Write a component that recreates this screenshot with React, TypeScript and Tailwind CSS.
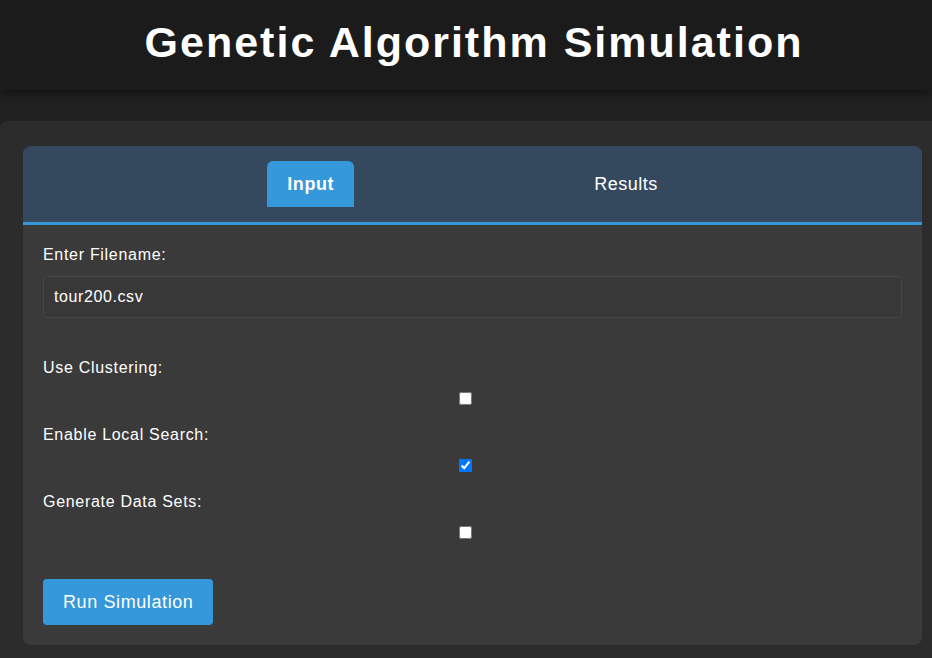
import { useState } from 'react';

export default function App() {
  const [tab, setTab] = useState<'input' | 'results'>('input');
  const [filename, setFilename] = useState('tour200.csv');
  const [clustering, setClustering] = useState(false);
  const [localSearch, setLocalSearch] = useState(true);
  const [generate, setGenerate] = useState(false);

  const options = [
    { label: 'Use Clustering:', value: clustering, set: setClustering },
    { label: 'Enable Local Search:', value: localSearch, set: setLocalSearch },
    { label: 'Generate Data Sets:', value: generate, set: setGenerate },
  ];

  return (
    <div className="min-h-screen bg-[#212121] text-white font-['Liberation_Sans',Arial,sans-serif] overflow-hidden">
      <header className="h-[90px] bg-[#1b1b1b] shadow-[0_4px_10px_rgba(0,0,0,0.45)] flex justify-center pt-[16px] pl-[16px] relative z-10">
        <h1 className="text-[43px] leading-[52px] font-bold tracking-[2px]">Genetic Algorithm Simulation</h1>
      </header>

      <main className="mt-[31px] bg-[#2c2c2c] rounded-tl-lg pt-[25px] pl-[23px] pr-[10px] pb-[25px]">
        <div className="bg-[#3a3a3a] rounded-lg overflow-hidden">
          <div className="bg-[#34495e] border-b-[3px] border-[#3498db] py-[15px] flex justify-center gap-[220px]">
            <button
              onClick={() => setTab('input')}
              className={`px-5 py-3 text-[18px] leading-[22px] tracking-[0.6px] rounded-t-md ${tab === 'input' ? 'bg-[#3498db] font-bold' : ''}`}
            >
              Input
            </button>
            <button
              onClick={() => setTab('results')}
              className={`px-5 py-3 text-[18px] leading-[22px] tracking-[0.5px] rounded-t-md ${tab === 'results' ? 'bg-[#3498db] font-bold' : ''}`}
            >
              Results
            </button>
          </div>

          <div className="px-5 pt-[21px] pb-5 tracking-[0.7px]">
            <label className="block text-[16px] leading-[18px] mb-[12px]">Enter Filename:</label>
            <input
              type="text"
              value={filename}
              onChange={(e) => setFilename(e.target.value)}
              className="block w-full h-[42px] px-[10px] bg-[#383838] border border-[#464646] rounded-[4px] text-[16px] tracking-[0.6px] text-white outline-none"
            />

            <div className="mt-[41px]">
              {options.map((opt) => (
                <div key={opt.label} className="mb-[21px] last:mb-0">
                  <label className="block text-[16px] leading-[18px] mb-[15px]">{opt.label}</label>
                  <div className="flex justify-center">
                    <input
                      type="checkbox"
                      checked={opt.value}
                      onChange={(e) => opt.set(e.target.checked)}
                      className="w-[13px] h-[13px] mr-[15px]"
                    />
                  </div>
                </div>
              ))}
            </div>

            <button className="mt-[40px] bg-[#3498db] rounded-[4px] px-5 py-3 text-[18px] leading-[22px] tracking-[0.6px]">
              Run Simulation
            </button>
          </div>
        </div>
      </main>
    </div>
  );
}
